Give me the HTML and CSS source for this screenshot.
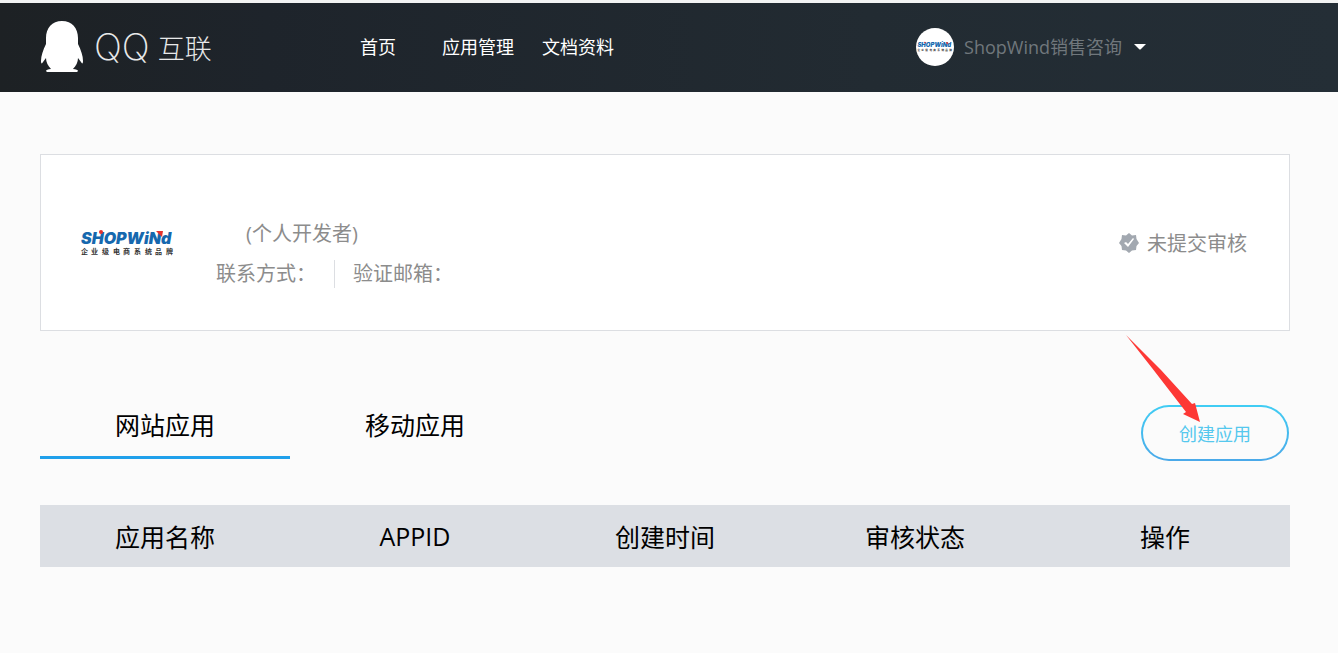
FILE: index.html
```html
<!DOCTYPE html>
<html lang="zh-CN">
<head>
<meta charset="utf-8">
<meta name="viewport" content="width=device-width, initial-scale=1">
<title>QQ互联</title>
<link rel="stylesheet" href="styles.css">
</head>
<body>
<header class="topbar">
  <a class="logo" href="#">
    <svg class="penguin" viewBox="0 0 44 52" aria-hidden="true">
      <path fill="#fff" d="M22 0C12 0 6 7 6 17v6C3 29 1 35 1 40c0 3 1 3 2 1l3-4c0 4 2 8 5 11-3 0-5 1-5 2s2 1 5 1h22c3 0 5 0 5-1s-2-2-5-2c3-3 5-7 5-11l3 4c1 2 2 2 2-1 0-5-2-11-5-17v-6C38 7 32 0 22 0z"/>
    </svg>
    <span class="logo-latin">QQ</span>
    <span class="logo-cn">互联</span>
  </a>
  <nav class="nav">
    <a class="nav-home" href="#">首页</a>
    <a href="#">应用管理</a>
    <a href="#">文档资料</a>
  </nav>
  <button class="user" type="button">
    <span class="avatar"><svg viewBox="0 0 96 30" aria-hidden="true"><use href="#shopwind"/></svg></span>
    <span>ShopWind销售咨询</span>
    <svg class="caret" viewBox="0 0 12 6" aria-hidden="true"><path d="M0 0h12L7 5q-1 1-2 0z" fill="#fff"/></svg>
  </button>
</header>
<main class="page">
  <section class="card">
    <svg class="brand" viewBox="0 0 96 30" role="img" aria-label="ShopWind">
      <g id="shopwind">
        <text class="brand-word" x="1" y="16" fill="#1668ae">SHOPWiNd</text>
        <circle cx="21" cy="4" r="2" fill="#e5322d"/>
        <path d="M76 3h7l-1 6z" fill="#e5322d"/>
        <text class="brand-tag" x="1 11 22 33 43 54 65 75 86" y="26" fill="#333">企业级电商系统品牌</text>
      </g>
    </svg>
    <div class="info">
      <p class="kind">(个人开发者)</p>
      <p class="contacts"><span class="contact">联系方式：</span><span>验证邮箱：</span></p>
    </div>
    <div class="status">
      <svg class="badge" viewBox="0 0 20 20" aria-hidden="true">
        <path d="M10 0l3 2.500 4-.5.5 4L20 10l-2.500 3-.5 4-4 .5L10 20l-3-2.500-4-.5-.5-4L0 10l2.500-4L3 2l4 .5z" fill="#a2a8b0"/>
        <path d="M5 10l2-1 2 2 5-6 1 1-6 8z" fill="#fff"/>
      </svg>
      <span>未提交审核</span>
    </div>
  </section>
  <div class="toolbar">
    <button class="tab tab-active" type="button">网站应用</button>
    <button class="tab" type="button">移动应用</button>
    <div class="create-wrap">
      <button class="create" type="button">创建应用</button>
      <svg class="arrow" viewBox="0 0 74 87" aria-hidden="true"><path d="M0 0L35 35 66 69 69 68 74 87 57 79 60 77 26 33z" fill="#fd3835"/></svg>
    </div>
  </div>
  <table class="apps">
    <thead><tr><th scope="col">应用名称</th><th scope="col">APPID</th><th scope="col">创建时间</th><th scope="col">审核状态</th><th scope="col">操作</th></tr></thead>
  </table>
</main>
</body>
</html>
```
FILE: styles.css
```css
* { box-sizing: border-box; }
body {
  margin: 0;
  background: #fbfbfb;
  color: #000;
  font-family: "Open Sans", "Noto Sans CJK SC", sans-serif;
  font-size: 18px;
}
button { padding: 0; border: 0; background: none; font: inherit; color: inherit; cursor: pointer; }
a { color: inherit; text-decoration: none; }
p { margin: 0; }
.brand-word { font: italic 900 16px Inter, sans-serif; }
.brand-tag { font: 700 7px "Noto Sans CJK SC", sans-serif; }

.topbar {
  display: flex;
  align-items: center;
  height: 92px;
  padding: 0 192px 2px 40px;
  border-top: 3px solid #f2f3f3;
  background: linear-gradient(90deg, #1d2124, #1e242b 20%, #222b32 65%, #242e36);
  color: #fff;
}
.logo { display: flex; align-items: center; width: 320px; color: #e8e9ea; font-weight: 300; }
.penguin { width: 44px; height: 52px; margin-right: 10px; }
.logo-latin { font-family: Inter, sans-serif; font-size: 37px; font-weight: 200; line-height: 40px; }
.logo-cn { margin-left: 8px; padding-top: 2px; font-family: "Noto Sans CJK SC", sans-serif; font-size: 27px; line-height: 40px; }
.nav { display: flex; gap: 28px; line-height: 28px; }
.nav-home { margin-right: 18px; }
.user { display: flex; align-items: center; margin-left: auto; color: #70777c; line-height: 28px; }
.avatar { display: flex; align-items: center; justify-content: center; width: 38px; height: 38px; margin-right: 10px; border-radius: 50%; background: #fff; }
.avatar svg { width: 36px; }
.caret { width: 12px; height: 6px; margin-left: 12px; }

.page { padding: 62px 48px 40px 40px; }
.card {
  display: flex;
  align-items: center;
  min-height: 177px;
  padding: 0 42px 0 39px;
  border: 1px solid #dcdee2;
  background: #fff;
  color: #8c8c8c;
  font-size: 20px;
}
.brand { width: 96px; height: 30px; overflow: visible; }
.info { padding: 22px 0 0 40px; line-height: 40px; }
.kind { padding-left: 30px; }
.contacts { display: flex; align-items: center; }
.contact { margin-right: 18px; border-right: 1px solid #dcdee2; padding-right: 18px; line-height: 28px; }
.status { display: flex; align-items: center; gap: 8px; margin-left: auto; }
.badge { width: 20px; height: 20px; }

.toolbar { display: flex; align-items: center; margin-top: 60px; }
.tab { width: 250px; height: 66px; padding-bottom: 2px; border-bottom: 3px solid transparent; font-size: 25px; }
.tab-active { border-color: #20a0eb; }
.create-wrap { position: relative; margin: 14px 1px 0 auto; }
.create {
  width: 148px;
  height: 56px;
  border: 2px solid transparent;
  border-radius: 28px;
  background: linear-gradient(#fbfbfb, #fbfbfb) padding-box, linear-gradient(#40cdf4, #4aa9e9) border-box;
  color: #55c8ee;
}
.arrow { position: absolute; left: -15px; top: -70px; width: 74px; height: 87px; pointer-events: none; }

.apps { width: 100%; margin-top: 44px; border-collapse: collapse; table-layout: fixed; background: #dcdfe4; }
.apps th { height: 62px; padding: 0; font-size: 25px; font-weight: 400; }
```
